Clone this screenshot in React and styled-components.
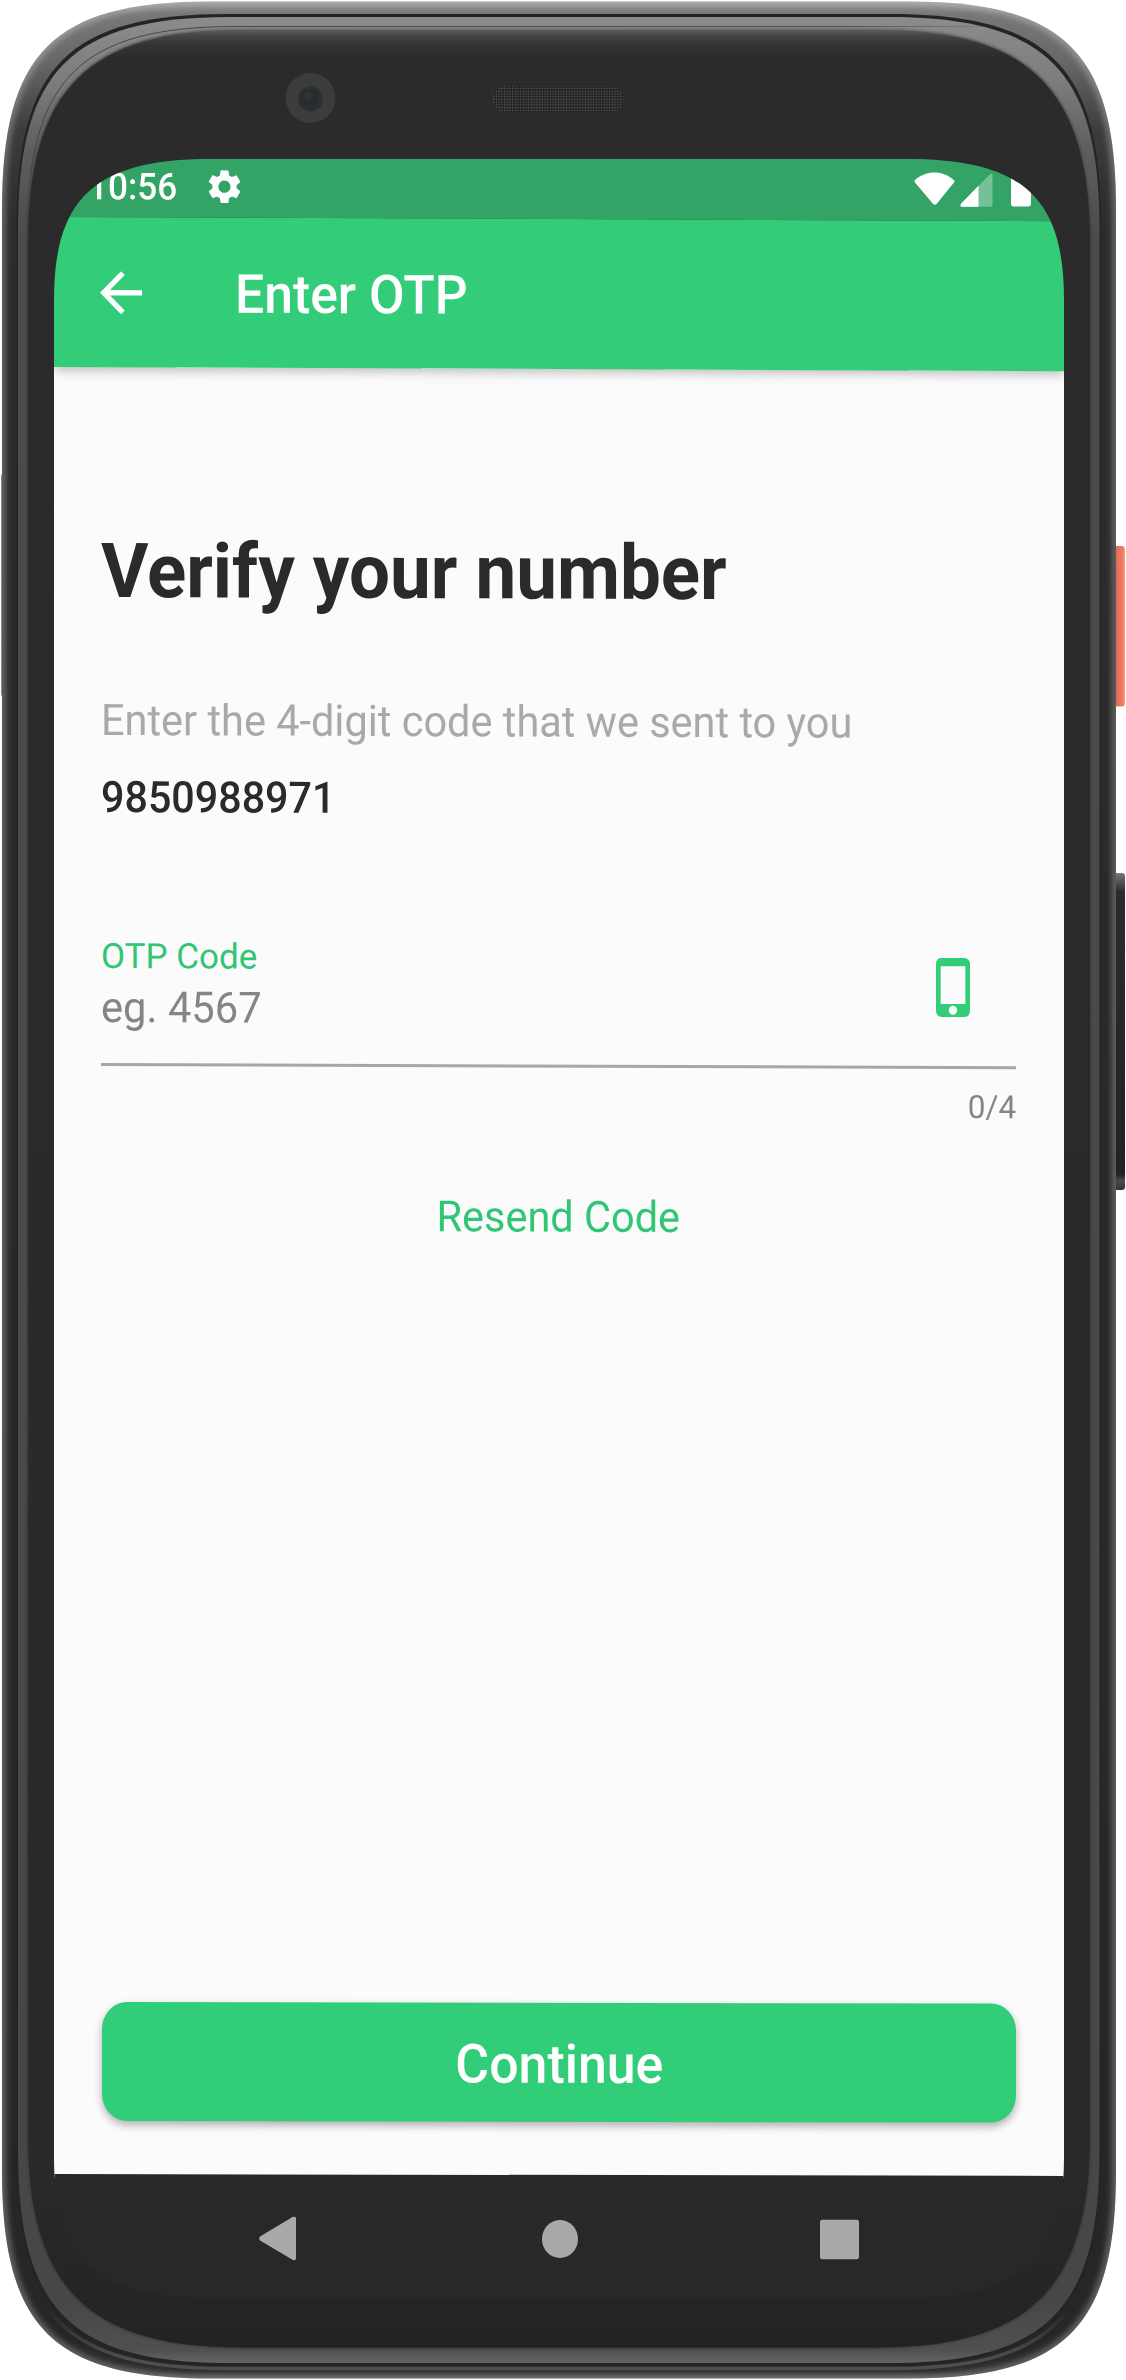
import React from "react";
import styled, { createGlobalStyle } from "styled-components";

const GREEN = "#33cd79";

const GlobalStyle = createGlobalStyle`
  body { margin: 0; background: #fff; font-family: Roboto, "Liberation Sans", sans-serif; }
  *, *::before, *::after { box-sizing: border-box; }
`;

const Device = styled.main`
  position: relative;
  width: 1126px;
  height: 2380px;
  padding: 159px 0 0 54px;
  overflow: hidden;
`;

const Hardware = styled.svg`
  position: absolute;
  inset: 0;
  z-index: -1;
`;

const Screen = styled.div`
  display: flex;
  flex-direction: column;
  width: 1010px;
  height: 2139px;
  clip-path: path("M0 141 C0 41 39 0 156 0 H854 C971 0 1010 41 1010 141 V1998 C1010 2098 971 2139 854 2139 H156 C39 2139 0 2098 0 1998 Z");
`;

const Header = styled.header`
  flex: none;
  margin-top: -10px;
  transform: skewY(0.235deg);
  transform-origin: 0 0;
  box-shadow: 0 3px 12px rgba(0, 0, 0, 0.26);
`;

const StatusBar = styled.div`
  display: flex;
  align-items: center;
  justify-content: space-between;
  height: 68px;
  padding: 8px 32px 0 34px;
  background: #33a466;
  color: #fff;
`;

const StatusGroup = styled.div`
  display: flex;
  align-items: center;
  gap: ${(p) => p.$gap}px;
  svg { margin-bottom: 2px; }
`;

const AppBar = styled.div`
  display: flex;
  align-items: center;
  gap: 93px;
  height: 150px;
  padding: 0 46px;
  background: ${GREEN};
  color: #fff;
`;

const IconButton = styled.button`
  display: flex;
  padding: 0;
  border: 0;
  background: none;
  color: inherit;
`;

const Text = styled.div`
  margin-top: ${(p) => p.$top || 0}px;
  align-self: ${(p) => p.$align || "auto"};
  width: max-content;
  font-size: ${(p) => p.$size}px;
  font-weight: ${(p) => p.$weight || 400};
  line-height: ${(p) => p.$line}px;
  color: ${(p) => p.$color || "inherit"};
  white-space: nowrap;
  transform: scaleX(${(p) => p.$fit || 1});
  transform-origin: ${(p) => p.$origin || "left"} center;
`;

const Content = styled.section`
  display: flex;
  flex: 1;
  flex-direction: column;
  margin-bottom: -4px;
  padding: 0 48px 0 47px;
  background: #fbfbfb;
`;

const Form = styled.div`
  display: flex;
  flex-direction: column;
  transform: skewY(0.2deg);
  transform-origin: 0 0;
`;

const Field = styled.div`
  display: flex;
  justify-content: space-between;
  height: 130px;
  margin-top: 112px;
  padding-right: 46px;
  border-bottom: 3px solid #a6a6a6;
`;

const FieldText = styled.div`
  display: flex;
  flex-direction: column;
`;

const FieldIcon = styled.div`
  padding-top: 19px;
`;

const Continue = styled.button`
  display: flex;
  align-items: center;
  justify-content: center;
  height: 119px;
  margin: auto 0 57px 1px;
  padding: 0 0 0 1px;
  border: 0;
  border-radius: 25px / 27px;
  background: #32cd79;
  box-shadow: 0 4px 8px rgba(0, 0, 0, 0.3);
  color: #fff;
  font-family: inherit;
  transform: skewY(0.1deg);
  transform-origin: 0 0;
`;

const NavBar = styled.nav`
  display: grid;
  flex: none;
  grid-template-columns: 284px 282px 276px;
  align-items: center;
  justify-items: center;
  height: 124px;
  margin-right: -2px;
  padding: 3px 0 0 81px;
  background: #282828;
  transform: skewY(0.11deg);
  transform-origin: 0 0;
`;

function shell(l, t, r, b, reach, bend) {
  return `M${l} ${t + reach} C${l} ${t + bend} ${l + bend} ${t} ${l + reach} ${t} H${r - reach} C${r - bend} ${t} ${r} ${t + bend} ${r} ${t + reach} V${b - reach} C${r} ${b - bend} ${r - bend} ${b} ${r - reach} ${b} H${l + reach} C${l + bend} ${b} ${l} ${b - bend} ${l} ${b - reach} Z`;
}

function VGradient({ id, stops }) {
  return (
    <linearGradient id={id} gradientUnits="userSpaceOnUse" x1="0" y1="0" x2="0" y2="2380">
      {stops.map(([y, color, opacity = 1]) => (
        <stop key={y} offset={y / 2380} stopColor={color} stopOpacity={opacity} />
      ))}
    </linearGradient>
  );
}

function PhoneBody() {
  const outer = shell(2, 1.5, 1116, 2378.5, 208, 51);
  return (
    <Hardware width="1126" height="2380" viewBox="0 0 1126 2380">
      <defs>
        <VGradient id="rim" stops={[[0, "#949494"], [14, "#787878"], [60, "#686868"], [130, "#3c3c3c"], [230, "#2b2b2b"], [2340, "#262626"], [2372, "#2c2c2c"], [2380, "#444"]]} />
        <VGradient id="band" stops={[[16, "#8c8c8c"], [80, "#7d7d7d"], [150, "#5e5e5e"], [240, "#4b4b4b"], [2300, "#474747"], [2350, "#505050"], [2363, "#646464"]]} />
        <VGradient id="glass" stops={[[30, "#5c5c5c"], [36, "#444"], [46, "#333"], [58, "#2b2b2b"], [2170, "#292929"], [2348, "#232323"]]} />
        <VGradient id="lowerLip" stops={[[2310, "#4e4e4e", 0], [2360, "#4e4e4e", 1]]} />
        <linearGradient id="seam" gradientUnits="userSpaceOnUse" x1="0" y1="0" x2="1126" y2="0">
          <stop offset="0" stopColor="#444" />
          <stop offset=".75" stopColor="#505050" />
          <stop offset=".9" stopColor="#505050" stopOpacity="0" />
        </linearGradient>
        <linearGradient id="power" x1="0" y1="0" x2="1" y2="0">
          <stop offset="0" stopColor="#b5523f" />
          <stop offset=".3" stopColor="#e6705a" />
          <stop offset=".8" stopColor="#ee7d64" />
          <stop offset="1" stopColor="#ff9c86" />
        </linearGradient>
        <linearGradient id="volume" x1="0" y1="0" x2="0" y2="1">
          <stop offset="0" stopColor="#777" />
          <stop offset=".06" stopColor="#2b2b2b" />
          <stop offset=".95" stopColor="#222" />
          <stop offset=".97" stopColor="#4a4a4a" />
          <stop offset="1" stopColor="#333" />
        </linearGradient>
        <pattern id="mesh" width="2.700" height="2.700" patternUnits="userSpaceOnUse">
          <rect width="3" height="3" fill="#424445" />
          <rect width="1.900" height="1.900" fill="#191b1c" />
        </pattern>
        <clipPath id="bodyClip"><path d={outer} /></clipPath>
        <filter id="soft" x="-5%" y="-5%" width="110%" height="110%"><feGaussianBlur stdDeviation="3" /></filter>
        <filter id="edge" x="-5%" y="-5%" width="110%" height="110%"><feGaussianBlur stdDeviation="1.5" /></filter>
      </defs>
      <rect x="1114" y="546" width="11" height="160.500" rx="3" fill="url(#power)" />
      <rect x="1114" y="873" width="11" height="317" rx="3" fill="url(#volume)" />
      <rect x="1" y="474" width="3" height="222" rx="1.500" fill="#8c8c8c" />
      <path d={outer} fill="url(#rim)" />
      <g clipPath="url(#bodyClip)">
        <path d={outer} fill="none" stroke="#fff" strokeOpacity=".32" strokeWidth="7" filter="url(#soft)" />
      </g>
      <path d={shell(16.5, 14, 1101, 2366, 212, 52)} fill="#242424" />
      <path d={shell(14, 14, 1103, 2368.5, 212, 52)} fill="none" stroke="url(#lowerLip)" strokeWidth="3.500" />
      <path d={shell(18, 17, 1099.5, 2363, 212, 53)} fill="url(#band)" />
      <path d={shell(28, 29, 1090, 2347.5, 214, 60)} fill="url(#glass)" filter="url(#edge)" />
      <path d={shell(28, 30, 1090, 2347.5, 214, 60)} fill="url(#glass)" />
      <path d="M27 230 C29 80 80 26.500 235 26.500 H1030" fill="none" stroke="url(#seam)" strokeWidth="1" />
      <circle cx="310.500" cy="98" r="25" fill="#3b3c3c" />
      <circle cx="310.500" cy="99" r="12.500" fill="#2d2f30" />
      <circle cx="309.500" cy="98" r="9" fill="#292c2e" />
      <circle cx="308.500" cy="96" r="4" fill="#303437" />
      <rect x="492.500" y="86" width="131" height="26" rx="13" fill="url(#mesh)" />
    </Hardware>
  );
}

function Gear() {
  return (
    <svg width="33" height="34" viewBox="2.2 2 19.6 20" preserveAspectRatio="none" fill="currentColor">
      <path d="M19.14 12.94c.04-.3.06-.61.06-.94 0-.32-.02-.64-.07-.94l2.03-1.58a.49.49 0 0 0 .12-.61l-1.92-3.32a.488.488 0 0 0-.59-.22l-2.39.96c-.5-.38-1.03-.7-1.62-.94l-.36-2.54a.484.484 0 0 0-.48-.41h-3.84c-.24 0-.43.17-.47.41l-.36 2.54c-.59.24-1.13.57-1.62.94l-2.39-.96c-.22-.08-.47 0-.59.22L2.74 8.87c-.12.21-.08.47.12.61l2.03 1.58c-.05.3-.09.63-.09.94s.02.64.07.94l-2.03 1.58a.49.49 0 0 0-.12.61l1.92 3.32c.12.22.37.29.59.22l2.39-.96c.5.38 1.03.7 1.62.94l.36 2.54c.05.24.24.41.48.41h3.84c.24 0 .44-.17.47-.41l.36-2.54c.59-.24 1.13-.56 1.62-.94l2.39.96c.22.08.47 0 .59-.22l1.92-3.32c.12-.22.07-.47-.12-.61l-2.01-1.58zM12 15.6c-1.98 0-3.6-1.62-3.6-3.6s1.62-3.6 3.6-3.6 3.6 1.62 3.6 3.6-1.62 3.6-3.6 3.6z" />
    </svg>
  );
}

function StatusIcons() {
  return (
    <svg width="118" height="36" viewBox="0 0 118 36" fill="#fff">
      <path d="M1 8.5 C12 -1.8 29 -1.8 40 8.5 Q41 9.5 40.2 10.6 L22.5 32.5 Q20.8 34 19.2 32.5 L.8 10.6 Q0 9.5 1 8.5Z" />
      <path d="M78.5 2.5 V33 Q78.5 35 76.5 35 H48 Q45.5 35 47 32 L75 3.5 Q78.5 .5 78.5 2.5Z" fillOpacity=".32" />
      <path d="M64.5 14 V35 H48 Q45.5 35 47 32Z" />
      <path d="M97 -3 H117 V32 Q117 34.5 114.5 34.5 H99.5 Q97 34.5 97 32Z" />
    </svg>
  );
}

function BackArrow() {
  return (
    <svg width="42" height="43" viewBox="4 4 16 16" preserveAspectRatio="none" fill="currentColor">
      <path d="M20 11H7.83l5.59-5.59L12 4l-8 8 8 8 1.41-1.41L7.83 13H20v-2z" />
    </svg>
  );
}

function Handset() {
  return (
    <svg width="34" height="59" viewBox="0 0 34 59" fill={GREEN}>
      <path fillRule="evenodd" d="M6 0H28Q34 0 34 6.5V52.5Q34 59 28 59H6Q0 59 0 52.5V6.5Q0 0 6 0ZM4.7 8.3V46H29.3V8.3ZM17 47.8A4.2 4.5 0 1 0 17 56.8A4.2 4.5 0 1 0 17 47.8Z" />
    </svg>
  );
}

export default function App() {
  return (
    <>
      <GlobalStyle />
      <Device>
        <PhoneBody />
        <Screen>
          <Header>
            <StatusBar>
              <StatusGroup $gap={26}>
                <Text $size={37} $line={44} $weight={500} $fit={0.95}>10:56</Text>
                <Gear />
              </StatusGroup>
              <StatusGroup $gap={0}><StatusIcons /></StatusGroup>
            </StatusBar>
            <AppBar>
              <IconButton aria-label="Back"><BackArrow /></IconButton>
              <Text $top={3} $size={54} $line={64} $weight={500} $fit={0.957}>Enter OTP</Text>
            </AppBar>
          </Header>
          <Content>
            <Form>
              <Text $top={159} $size={76} $line={90} $weight={700} $fit={0.957} $color="#2a2a2a">Verify your number</Text>
              <Text $top={79} $size={43.5} $line={52} $fit={0.954} $color="#a9a9a9">Enter the 4-digit code that we sent to you</Text>
              <Text $top={25} $size={43.5} $line={52} $weight={500} $fit={0.948} $color="#2a2a2a">9850988971</Text>
              <Field>
                <FieldText>
                  <Text $size={35} $line={42} $color="#30c675">OTP Code</Text>
                  <Text $top={4} $size={43} $line={50} $fit={0.97} $color="#858585">eg. 4567</Text>
                </FieldText>
                <FieldIcon><Handset /></FieldIcon>
              </Field>
              <Text $top={18} $size={32} $line={40} $fit={0.985} $color="#858585" $align="flex-end" $origin="right">0/4</Text>
              <Text $top={65} $size={43} $line={52} $fit={0.965} $color="#30c675" $align="center" $origin="center">Resend Code</Text>
            </Form>
            <Continue>
              <Text $top={4} $size={54} $line={64} $weight={500} $fit={0.96} $origin="center">Continue</Text>
            </Continue>
          </Content>
          <NavBar>
            <svg width="37" height="44" viewBox="0 0 37 44" fill="#a9a9a9"><path d="M33.5 .6Q37-1 37 2.5V41.5Q37 45 33.5 43.4L1 24Q-.7 22 1 20Z" /></svg>
            <svg width="36" height="38" viewBox="0 0 36 38" fill="#a9a9a9"><ellipse cx="18" cy="19" rx="18" ry="19" /></svg>
            <svg width="39" height="40" viewBox="0 0 39 40" fill="#a9a9a9"><rect width="39" height="40" rx="3" /></svg>
          </NavBar>
        </Screen>
      </Device>
    </>
  );
}
